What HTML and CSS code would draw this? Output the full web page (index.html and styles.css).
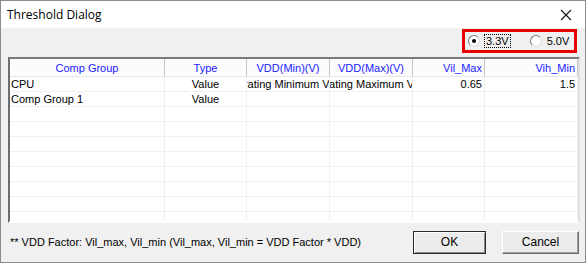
FILE: index.html
```html
<!DOCTYPE html>
<html lang="en">
<head>
    <meta charset="UTF-8">
    <title>Threshold Dialog</title>
    <link rel="stylesheet" href="styles.css">
</head>
<body>
    <div class="window">
        <div class="titlebar">
            <span class="title">Threshold Dialog</span>
            <svg class="close" width="12" height="12" viewBox="0 0 12 12">
                <path d="M1 1 L11 11 M11 1 L1 11" stroke="#111" stroke-width="1.1" fill="none"/>
            </svg>
        </div>
        <div class="content">
            <div class="voltage-row">
                <div class="voltage-box">
                    <label class="radio checked"><span class="dot"></span><span class="focus">3.3V</span></label>
                    <label class="radio"><span class="dot"></span><span>5.0V</span></label>
                </div>
            </div>

            <div class="grid">
                <div class="row head">
                    <div class="cell c">Comp Group</div>
                    <div class="cell c">Type</div>
                    <div class="cell c">VDD(Min)(V)</div>
                    <div class="cell c">VDD(Max)(V)</div>
                    <div class="cell r">Vil_Max</div>
                    <div class="cell r">Vih_Min</div>
                </div>
                <div class="row">
                    <div class="cell l">CPU</div>
                    <div class="cell c">Value</div>
                    <div class="cell c shift"><span class="clip">Operating Minimum Voltage</span></div>
                    <div class="cell c shift"><span class="clip">Operating Maximum Voltage</span></div>
                    <div class="cell r">0.65</div>
                    <div class="cell r">1.5</div>
                </div>
                <div class="row">
                    <div class="cell l">Comp Group 1</div>
                    <div class="cell c">Value</div>
                    <div class="cell"></div><div class="cell"></div><div class="cell"></div><div class="cell"></div>
                </div>
                <div class="row"><div class="cell"></div><div class="cell"></div><div class="cell"></div><div class="cell"></div><div class="cell"></div><div class="cell"></div></div>
                <div class="row"><div class="cell"></div><div class="cell"></div><div class="cell"></div><div class="cell"></div><div class="cell"></div><div class="cell"></div></div>
                <div class="row"><div class="cell"></div><div class="cell"></div><div class="cell"></div><div class="cell"></div><div class="cell"></div><div class="cell"></div></div>
                <div class="row"><div class="cell"></div><div class="cell"></div><div class="cell"></div><div class="cell"></div><div class="cell"></div><div class="cell"></div></div>
                <div class="row"><div class="cell"></div><div class="cell"></div><div class="cell"></div><div class="cell"></div><div class="cell"></div><div class="cell"></div></div>
                <div class="row"><div class="cell"></div><div class="cell"></div><div class="cell"></div><div class="cell"></div><div class="cell"></div><div class="cell"></div></div>
                <div class="row"><div class="cell"></div><div class="cell"></div><div class="cell"></div><div class="cell"></div><div class="cell"></div><div class="cell"></div></div>
                <div class="row"><div class="cell"></div><div class="cell"></div><div class="cell"></div><div class="cell"></div><div class="cell"></div><div class="cell"></div></div>
            </div>

            <div class="footer">
                <span class="note">** VDD Factor: Vil_max, Vil_min (Vil_max, Vil_min = VDD Factor * VDD)</span>
                <div class="buttons">
                    <button class="btn default">OK</button>
                    <button class="btn">Cancel</button>
                </div>
            </div>
        </div>
    </div>
</body>
</html>
```

FILE: styles.css
```css
body {
    margin: 0;
    padding: 0;
    background: #fff;
    font-family: "Liberation Sans", Arial, sans-serif;
    font-size: 11px;
    color: #000;
}
.window {
    width: 584px;
    height: 261px;
    border: 1px solid #8c8c8c;
    background: #f0f0f0;
    display: flex;
    flex-direction: column;
    overflow: hidden;
}
.titlebar {
    height: 27px;
    background: #fff;
    display: flex;
    align-items: center;
    justify-content: space-between;
    padding: 0 13px 0 6px;
    flex-shrink: 0;
}
.title {
    font-family: "Open Sans", "Noto Sans", sans-serif;
    font-size: 12px;
    color: #000;
}
.content {
    flex: 1;
    display: flex;
    flex-direction: column;
    padding: 1px 5px 0 7px;
}

/* radio buttons */
.voltage-row {
    display: flex;
    justify-content: flex-end;
    padding-right: 3px;
}
.voltage-box {
    width: 106px;
    height: 18px;
    border: 3px solid #e80000;
    display: flex;
    align-items: center;
    gap: 20px;
    padding-left: 3px;
    overflow: hidden;
}
.radio {
    display: flex;
    align-items: center;
    gap: 5px;
    font-size: 11px;
}
.dot {
    width: 12px;
    height: 12px;
    border-radius: 50%;
    box-sizing: border-box;
    border: 1px solid #7a7a7a;
    border-right-color: #dcdcdc;
    border-bottom-color: #dcdcdc;
    background: #fff;
    display: flex;
    align-items: center;
    justify-content: center;
}
.radio.checked .dot::after {
    content: "";
    width: 4px;
    height: 4px;
    border-radius: 50%;
    background: #000;
}
.focus {
    outline: 1px dotted #000;
    padding: 0 1px;
}

/* grid */
.grid {
    margin-top: 4px;
    height: 162px;
    background: #fff;
    border-top: 2px solid #7a7a7a;
    border-left: 2px solid #6e6e6e;
    border-right: 2px solid #e0e0e0;
    border-bottom: 2px solid #fff;
    overflow: hidden;
}
.row {
    display: grid;
    grid-template-columns: 155px 82px 83px 83px 72px 93px;
    height: 15px;
}
.row.head {
    height: 17px;
    color: #1a1aff;
    background: #fcfcfc;
    border-bottom: 1px solid #e6e6e6;
}
.cell {
    display: flex;
    align-items: center;
    justify-content: center;
    overflow: hidden;
    white-space: nowrap;
    border-right: 1px solid #f0f0f0;
    border-bottom: 1px solid #f0f0f0;
}
.head .cell {
    border-bottom: none;
    border-right: 1px solid #c8c8c8;
}
.clip {
    flex-shrink: 0;
}
.cell.shift { padding-left: 6px; }
.cell.l { justify-content: flex-start; padding-left: 1px; }
.cell.r { justify-content: flex-end; padding-right: 2px; }

/* footer */
.footer {
    flex: 1;
    display: flex;
    align-items: center;
    justify-content: space-between;
    padding: 0 0 1px 2px;
}
.buttons {
    display: flex;
    gap: 16px;
    padding-right: 1px;
}
.btn {
    width: 77px;
    height: 23px;
    font-family: "Liberation Sans", Arial, sans-serif;
    font-size: 12px;
    background: #ececec;
    border: 1px solid;
    border-color: #fff #6e6e6e #6e6e6e #fff;
    box-shadow: inset -1px -1px 0 #a0a0a0;
    padding: 0;
}
.btn.default {
    width: 73px;
    border-color: #2a2a2a;
    box-shadow: inset 1px 1px 0 #fff, inset -1px -1px 0 #8a8a8a;
}
```
